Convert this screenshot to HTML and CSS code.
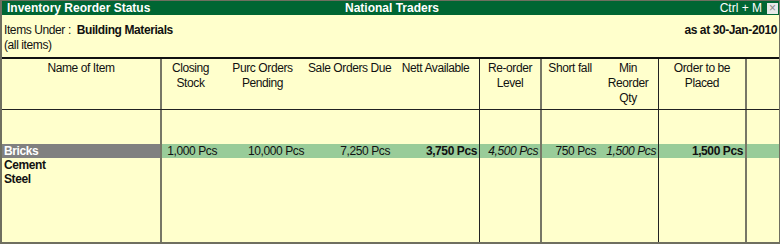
FILE: index.html
```html
<!DOCTYPE html>
<html lang="en">
<head>
    <meta charset="UTF-8">
    <title>Inventory Reorder Status</title>
    <link rel="stylesheet" href="styles.css">
</head>
<body>
    <div class="report">
        <div class="title-bar">
            <span class="title-left">Inventory Reorder Status</span>
            <span class="title-mid">National Traders</span>
            <span class="title-right">Ctrl + M <span class="close-box">&times;</span></span>
        </div>
        <div class="info">
            <div class="info-line">
                <span>Items Under : &nbsp;<b>Building Materials</b></span>
                <b>as at 30-Jan-2010</b>
            </div>
            <div class="info-line">(all items)</div>
        </div>
        <div class="sheet">
            <div class="row head">
                <div class="cell c-name">Name of Item</div>
                <div class="cell c-close">Closing<br>Stock</div>
                <div class="cell c-purc">Purc Orders<br>Pending</div>
                <div class="cell c-sale">Sale Orders Due</div>
                <div class="cell c-nett">Nett Available</div>
                <div class="cell c-reorder">Re-order<br>Level</div>
                <div class="cell c-short">Short fall</div>
                <div class="cell c-min">Min<br>Reorder<br>Qty</div>
                <div class="cell c-order">Order to be<br>Placed</div>
                <div class="cell c-last"></div>
            </div>
            <div class="row gap">
                <div class="cell c-name"></div>
                <div class="cell c-close"></div>
                <div class="cell c-purc"></div>
                <div class="cell c-sale"></div>
                <div class="cell c-nett"></div>
                <div class="cell c-reorder"></div>
                <div class="cell c-short"></div>
                <div class="cell c-min"></div>
                <div class="cell c-order"></div>
                <div class="cell c-last"></div>
            </div>
            <div class="row item selected">
                <div class="cell c-name">Bricks</div>
                <div class="cell c-close">1,000 Pcs</div>
                <div class="cell c-purc">10,000 Pcs</div>
                <div class="cell c-sale">7,250 Pcs</div>
                <div class="cell c-nett"><b>3,750 Pcs</b></div>
                <div class="cell c-reorder"><i>4,500 Pcs</i></div>
                <div class="cell c-short">750 Pcs</div>
                <div class="cell c-min"><i>1,500 Pcs</i></div>
                <div class="cell c-order"><b>1,500 Pcs</b></div>
                <div class="cell c-last"></div>
            </div>
            <div class="row item">
                <div class="cell c-name">Cement</div>
                <div class="cell c-close"></div>
                <div class="cell c-purc"></div>
                <div class="cell c-sale"></div>
                <div class="cell c-nett"></div>
                <div class="cell c-reorder"></div>
                <div class="cell c-short"></div>
                <div class="cell c-min"></div>
                <div class="cell c-order"></div>
                <div class="cell c-last"></div>
            </div>
            <div class="row item">
                <div class="cell c-name">Steel</div>
                <div class="cell c-close"></div>
                <div class="cell c-purc"></div>
                <div class="cell c-sale"></div>
                <div class="cell c-nett"></div>
                <div class="cell c-reorder"></div>
                <div class="cell c-short"></div>
                <div class="cell c-min"></div>
                <div class="cell c-order"></div>
                <div class="cell c-last"></div>
            </div>
            <div class="row filler">
                <div class="cell c-name"></div>
                <div class="cell c-close"></div>
                <div class="cell c-purc"></div>
                <div class="cell c-sale"></div>
                <div class="cell c-nett"></div>
                <div class="cell c-reorder"></div>
                <div class="cell c-short"></div>
                <div class="cell c-min"></div>
                <div class="cell c-order"></div>
                <div class="cell c-last"></div>
            </div>
        </div>
    </div>
</body>
</html>
```

FILE: styles.css
```css
body {
    margin: 0;
    padding: 0;
    font-family: "Liberation Sans", Arial, sans-serif;
    font-size: 12px;
    letter-spacing: -0.4px;
    color: #111;
}

.report {
    box-sizing: border-box;
    width: 780px;
    height: 244px;
    background-color: #FFFFCC;
    border-top: 1px solid #6f6f60;
    border-left: 2px solid #6f6f60;
    border-right: 1px solid #6f6f60;
    border-bottom: 2px solid #6f6f60;
    display: flex;
    flex-direction: column;
}

.title-bar {
    height: 14px;
    line-height: 14px;
    background-color: #006633;
    color: white;
    font-weight: bold;
    letter-spacing: 0;
    display: flex;
    align-items: center;
    padding: 0 1px 0 5px;
    position: relative;
}

.title-left {
    flex: 1;
}

.title-mid {
    position: absolute;
    left: 343px;
}

.title-right {
    display: flex;
    align-items: center;
    font-weight: normal;
    gap: 5px;
}

.close-box {
    width: 11px;
    height: 11px;
    line-height: 10px;
    background-color: #e8e8e8;
    color: #888;
    text-align: center;
    font-size: 12px;
}

.info {
    height: 42px;
    padding: 8px 2px 0 2px;
    box-sizing: border-box;
}

.info-line {
    line-height: 15px;
    display: flex;
    justify-content: space-between;
}

.sheet {
    flex: 1;
    display: flex;
    flex-direction: column;
    border-top: 2px solid #111;
}

.row {
    display: flex;
}

.cell {
    box-sizing: border-box;
    padding: 0 2px;
    white-space: nowrap;
    text-align: right;
}

.c-name { width: 160px; border-right: 2px solid #777766; text-align: left; font-weight: bold; }
.c-close { width: 57px; }
.c-purc { width: 87px; }
.c-sale { width: 86px; }
.c-nett { width: 88px; border-right: 1px solid #222; }
.c-reorder { width: 62px; border-right: 2px solid #777766; }
.c-short { width: 56px; }
.c-min { width: 61px; border-right: 1px solid #222; }
.c-order { width: 88px; border-right: 2px solid #777766; }
.c-last { width: 32px; }

.head {
    height: 50px;
    border-bottom: 1px solid #222;
}

.head .cell {
    text-align: center;
    line-height: 15px;
    padding-top: 2px;
    font-weight: normal;
}

.gap {
    height: 34px;
}

.item {
    height: 14px;
    line-height: 14px;
}

.selected .cell {
    background-color: #99CC99;
}

.selected .c-name {
    background-color: #808080;
    color: white;
}

.filler {
    flex: 1;
}
```
